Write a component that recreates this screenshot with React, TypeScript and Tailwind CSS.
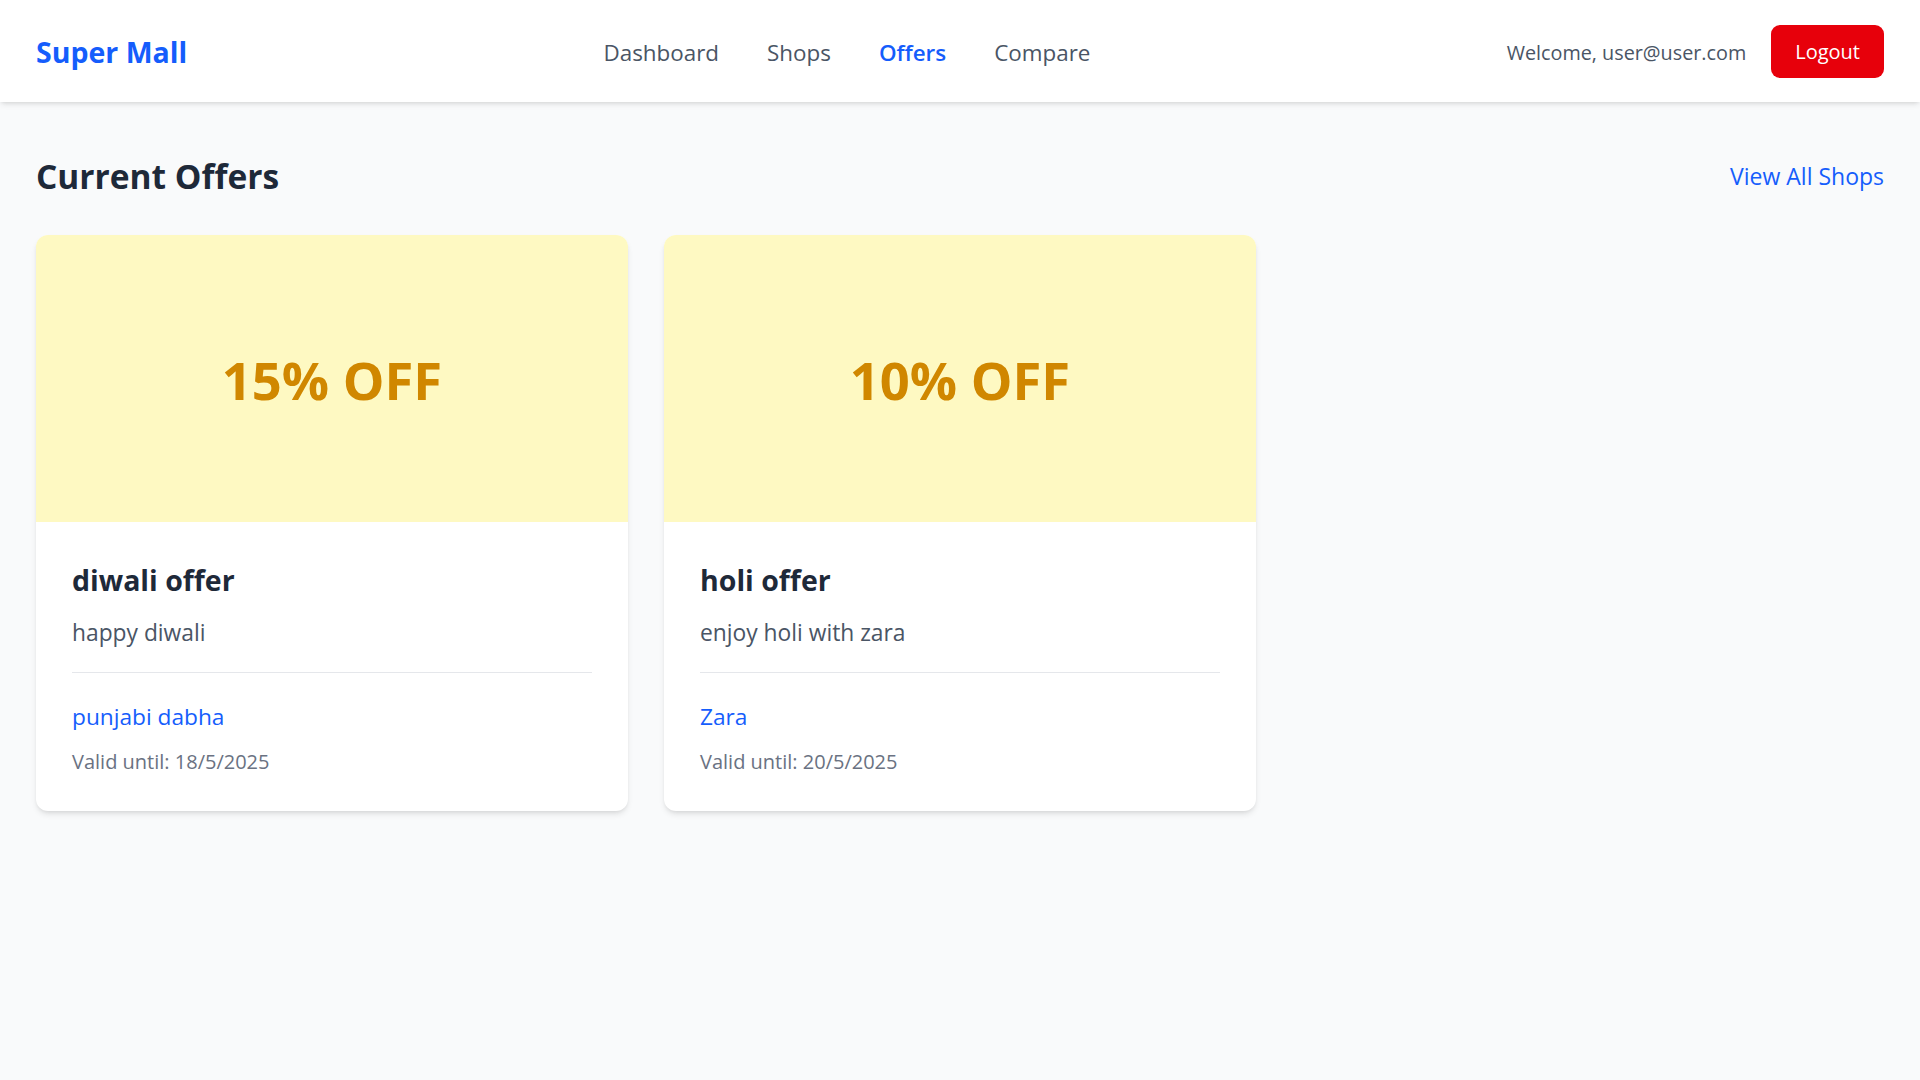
import React from "react";

const offers = [
  { pct: "15% OFF", title: "diwali offer", desc: "happy diwali", shop: "punjabi dabha", valid: "Valid until: 18/5/2025" },
  { pct: "10% OFF", title: "holi offer", desc: "enjoy holi with zara", shop: "Zara", valid: "Valid until: 20/5/2025" },
];

export default function App() {
  return (
    <div className="min-h-screen bg-[#f9fafb]" style={{ fontFamily: '"Open Sans", "Noto Sans", sans-serif' }}>
      <header className="h-[102px] bg-white shadow-[0_3px_6px_-1px_rgba(0,0,0,0.1),0_2px_4px_-2px_rgba(0,0,0,0.1)] px-[36px] flex items-center justify-between relative z-10">
        <div className="text-[28.5px] font-bold text-[#155dfc] leading-[45px] pt-[3px]">Super Mall</div>
        <nav className="flex items-center gap-[48px] text-[22.4px] leading-[36px] text-[#4a5565] pt-[4px]">
          <a>Dashboard</a>
          <a>Shops</a>
          <a className="text-[#155dfc] font-semibold">Offers</a>
          <a>Compare</a>
        </nav>
        <div className="flex items-center gap-[25px]">
          <span className="text-[19.8px] leading-[30px] text-[#4a5565] pt-[3px]">Welcome, user@user.com</span>
          <button className="h-[53px] px-[24px] pt-[2px] rounded-[9px] bg-[#e7000b] text-white text-[20px] leading-[30px]">Logout</button>
        </div>
      </header>
      <main className="px-[36px] pt-[50px]">
        <div className="flex items-center justify-between h-[48px] mb-[35px]">
          <h1 className="text-[33.5px] font-bold text-[#1e2939] leading-[48px]">Current Offers</h1>
          <a className="text-[23px] leading-[36px] text-[#155dfc]">View All Shops</a>
        </div>
        <div className="grid grid-cols-3 gap-[36px]">
          {offers.map((o) => (
            <div key={o.title} className="bg-white rounded-[12px] overflow-hidden shadow-[0_4px_6px_-1px_rgba(0,0,0,0.1),0_2px_4px_-2px_rgba(0,0,0,0.1)]">
              <div className="h-[287px] bg-[#fef9c2] flex items-center justify-center">
                <span className="text-[52.5px] font-bold text-[#d08700] leading-[60px] pt-[2px]">{o.pct}</span>
              </div>
              <div className="px-[36px] pt-[37px] pb-[34px]">
                <h3 className="text-[28.5px] font-bold text-[#1e2939] leading-[42px] mb-[14px]">{o.title}</h3>
                <p className="text-[22.8px] leading-[36px] text-[#4a5565]">{o.desc}</p>
                <div className="mt-[21px] border-t border-[#e5e7eb] pt-[26px]">
                  <p className="text-[22.7px] leading-[36px] text-[#155dfc]">{o.shop}</p>
                  <p className="mt-[12px] text-[20px] leading-[30px] text-[#6a7282]">{o.valid}</p>
                </div>
              </div>
            </div>
          ))}
        </div>
      </main>
    </div>
  );
}
